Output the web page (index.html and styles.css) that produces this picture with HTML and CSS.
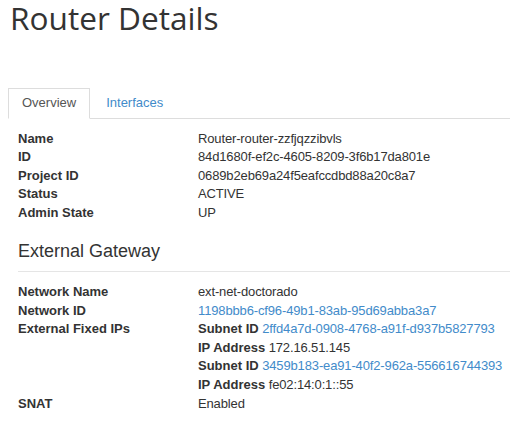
FILE: index.html
```html
<!DOCTYPE html>
<html>
<head>
<meta charset="utf-8">
<link rel="stylesheet" href="styles.css">
</head>
<body>
<div class="page">
  <h1 class="title">Router Details</h1>
  <ul class="tabs">
    <li class="tab active"><a>Overview</a></li>
    <li class="tab"><a>Interfaces</a></li>
  </ul>
  <div class="content">
    <dl class="info">
      <dt>Name</dt><dd>Router-router-zzfjqzzibvls</dd>
      <dt>ID</dt><dd>84d1680f-ef2c-4605-8209-3f6b17da801e</dd>
      <dt>Project ID</dt><dd>0689b2eb69a24f5eafccdbd88a20c8a7</dd>
      <dt>Status</dt><dd>ACTIVE</dd>
      <dt>Admin State</dt><dd>UP</dd>
    </dl>
    <h4 class="section">External Gateway</h4>
    <dl class="info">
      <dt>Network Name</dt><dd>ext-net-doctorado</dd>
      <dt>Network ID</dt><dd><a class="link">1198bbb6-cf96-49b1-83ab-95d69abba3a7</a></dd>
      <dt>External Fixed IPs</dt>
      <dd>
        <div><b>Subnet ID</b> <a class="link">2ffd4a7d-0908-4768-a91f-d937b5827793</a></div>
        <div><b>IP Address</b> 172.16.51.145</div>
        <div><b>Subnet ID</b> <a class="link">3459b183-ea91-40f2-962a-556616744393</a></div>
        <div><b>IP Address</b> fe02:14:0:1::55</div>
      </dd>
      <dt>SNAT</dt><dd>Enabled</dd>
    </dl>
  </div>
</div>
</body>
</html>
```

FILE: styles.css
```css
html, body {
  margin: 0;
  padding: 0;
  background: #fff;
  overflow: hidden;
}
body {
  font-family: "Liberation Sans", Arial, sans-serif;
  font-size: 13px;
  line-height: 18.57px;
  color: #333;
}
.page {
  padding: 0 0 0 8px;
}
.title {
  font-family: "Open Sans", "Noto Sans", sans-serif;
  font-weight: 400;
  font-size: 31.6px;
  line-height: 34px;
  color: #333;
  margin: 1px 0 0 2px;
}
.tabs {
  list-style: none;
  margin: 53px 0 0 0;
  padding: 0;
  display: flex;
  border-bottom: 1px solid #ddd;
}
.tab {
  margin: 0 2px -1px 0;
}
.tab a {
  display: block;
  padding: 5px 13px;
  border: 1px solid transparent;
  color: #428bca;
}
.tab.active a {
  color: #555;
  border-color: #ddd #ddd transparent #ddd;
  background: #fff;
}
.content {
  padding: 0 0 0 10px;
}
.info {
  display: grid;
  grid-template-columns: 180px 1fr;
  margin: 11px 0 0 0;
}
.info dt {
  font-weight: bold;
  white-space: nowrap;
}
.info dd {
  margin: 0;
  white-space: nowrap;
  letter-spacing: -0.14px;
}
.info dd b {
  letter-spacing: 0;
}
.link {
  color: #428bca;
}
.section {
  font-size: 18px;
  font-weight: 400;
  line-height: 19.8px;
  margin: 20px 0 0 0;
  padding-bottom: 9px;
  border-bottom: 1px solid #e5e5e5;
}
```
